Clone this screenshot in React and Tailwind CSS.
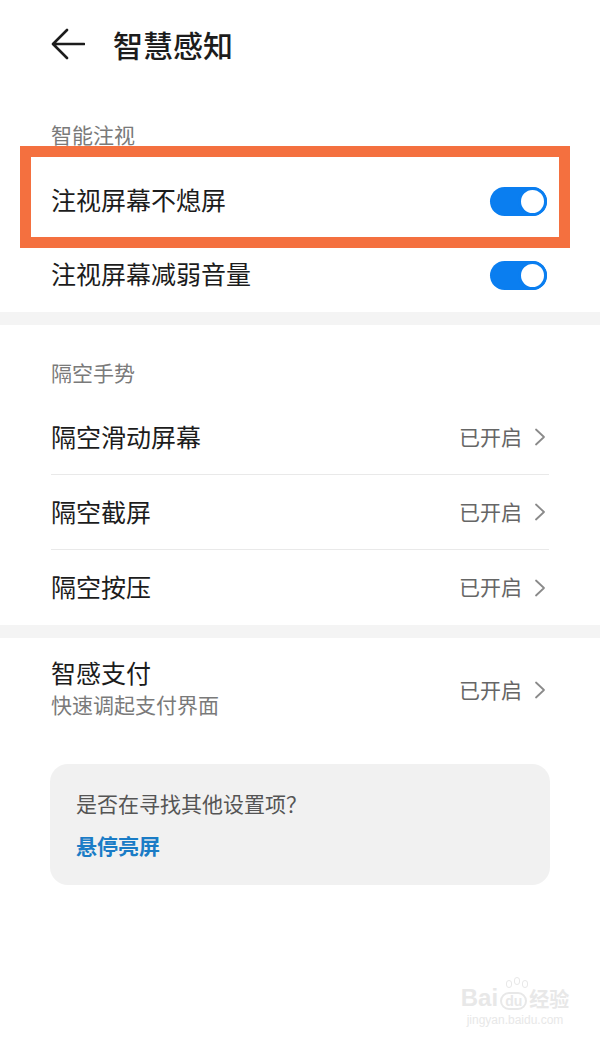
import React from 'react';

const FONT = { fontFamily: '"Noto Sans CJK SC", "Noto Sans", sans-serif' };

const Toggle = () => (
  <div className="relative w-[57px] h-[29px] rounded-full bg-[#0a7ef0] shrink-0">
    <div className="absolute right-0 top-0 w-[29px] h-[29px] rounded-full bg-white border-[3px] border-[#0a7ef0]" />
  </div>
);

const Chevron = () => (
  <svg width="12" height="18" viewBox="0 0 12 18" fill="none" className="shrink-0">
    <path d="M2 1.5 L10 9 L2 16.5" stroke="#8a8a8a" strokeWidth="1.8" strokeLinecap="round" strokeLinejoin="round" />
  </svg>
);

const SectionTitle = ({ children }) => (
  <div className="h-[75px] pt-[35px] pl-[51px]">
    <p className="text-[21px] leading-[24px] text-[#7a7a7a]">{children}</p>
  </div>
);

const ToggleRow = ({ label, highlight }) => (
  <div className="relative h-[74px] flex items-center justify-between pl-[51px] pr-[53px]">
    <span className="text-[25px] leading-[30px] pb-[4px] text-[#1c1c1c]">{label}</span>
    <Toggle />
    {highlight && (
      <div className="absolute left-[20px] top-[-18px] w-[550px] h-[102px] border-[11px] border-[#f4703f] pointer-events-none" />
    )}
  </div>
);

const Status = () => (
  <div className="flex items-center gap-[12px]">
    <span className="text-[21px] leading-[26px] pb-[3px] text-[#666666]">已开启</span>
    <Chevron />
  </div>
);

const LinkRow = ({ label, last }) => (
  <div className={`mx-[51px] h-[75px] flex items-center justify-between pr-[3px] ${last ? '' : 'border-b border-[#e9e9e9]'}`}>
    <span className="text-[25px] leading-[30px] pb-[3px] text-[#1c1c1c]">{label}</span>
    <Status />
  </div>
);

const Band = () => <div className="h-[13px] bg-[#f4f4f4]" />;

export default function App() {
  return (
    <div className="relative w-[600px] h-[1055px] bg-white overflow-hidden" style={FONT}>
      {/* Header */}
      <div className="h-[88px] flex items-center">
        <svg width="34" height="32" viewBox="0 0 34 32" fill="none" className="ml-[51px]">
          <path d="M33 16 H3 M16 2 L2 16 L16 30" stroke="#1c1c1c" strokeWidth="2.6" strokeLinecap="round" strokeLinejoin="round" />
        </svg>
        <h1 className="ml-[28px] text-[30px] leading-[36px] font-medium text-[#1c1c1c]">智慧感知</h1>
      </div>

      {/* 智能注视 */}
      <div className="h-[76px] pt-[34px] pl-[51px]">
        <p className="text-[21px] leading-[24px] text-[#7a7a7a]">智能注视</p>
      </div>
      <ToggleRow label="注视屏幕不熄屏" highlight />
      <ToggleRow label="注视屏幕减弱音量" />

      <Band />

      {/* 隔空手势 */}
      <SectionTitle>隔空手势</SectionTitle>
      <LinkRow label="隔空滑动屏幕" />
      <LinkRow label="隔空截屏" />
      <LinkRow label="隔空按压" last />

      <Band />

      {/* 智感支付 */}
      <div className="mx-[51px] h-[104px] flex items-center justify-between pr-[3px]">
        <div className="flex flex-col gap-[4px] pb-[6px]">
          <span className="text-[25px] leading-[30px] text-[#1c1c1c]">智感支付</span>
          <span className="text-[21px] leading-[26px] text-[#7a7a7a]">快速调起支付界面</span>
        </div>
        <Status />
      </div>

      {/* Suggestion card */}
      <div className="mx-[50px] mt-[22px] h-[121px] rounded-[18px] bg-[#f1f1f1] px-[26px] pt-[26px] flex flex-col gap-[16px]">
        <p className="text-[21px] leading-[26px] text-[#555555]">是否在寻找其他设置项？</p>
        <p className="text-[21px] leading-[26px] font-bold text-[#1a7cc6]">悬停亮屏</p>
      </div>

      {/* Watermark */}
      <div className="absolute left-[460px] top-[986px] w-[110px] flex flex-col items-center text-[#e8e8e8] pointer-events-none" style={{ fontFamily: '"Liberation Sans", "Noto Sans CJK SC", sans-serif' }}>
        <div className="flex items-end leading-none">
          <span className="text-[24px] font-bold">Bai</span>
          <span className="relative mx-[2px] text-[14px] font-bold border-2 border-[#e8e8e8] rounded-full px-[3px]">
            du
            <span className="absolute left-[4px] top-[-14px] w-[6px] h-[8px] rounded-full border border-[#e8e8e8]" />
            <span className="absolute left-[12px] top-[-17px] w-[6px] h-[8px] rounded-full border border-[#e8e8e8]" />
            <span className="absolute left-[20px] top-[-14px] w-[6px] h-[8px] rounded-full border border-[#e8e8e8]" />
          </span>
          <span className="text-[20px] font-bold">经验</span>
        </div>
        <span className="text-[12px] leading-[16px] mt-[2px]">jingyan.baidu.com</span>
      </div>
    </div>
  );
}
